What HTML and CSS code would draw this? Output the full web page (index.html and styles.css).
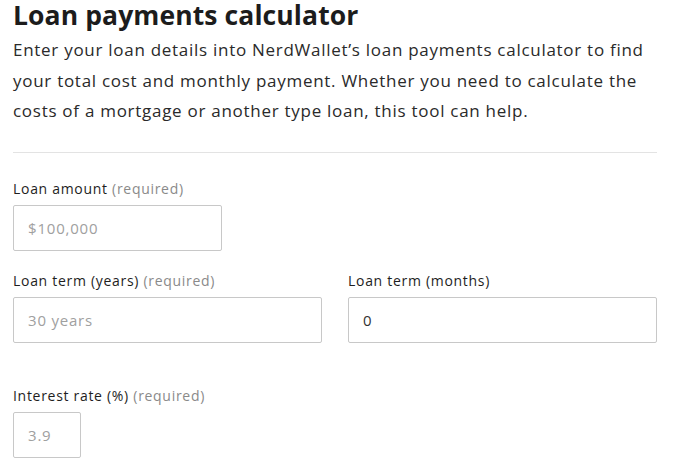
FILE: index.html
```html
<!DOCTYPE html>
<html>
<head>
<meta charset="utf-8">
<link rel="stylesheet" href="styles.css">
</head>
<body>
<main class="calc">
  <h1 class="title">Loan payments calculator</h1>
  <p class="intro">Enter your loan details into NerdWallet’s loan payments calculator to find your total cost and monthly payment. Whether you need to calculate the costs of a mortgage or another type loan, this tool can help.</p>
  <hr class="divider">
  <div class="field first">
    <label class="label">Loan amount <span class="req">(required)</span></label>
    <div class="input w-amount"><span class="ph">$100,000</span></div>
  </div>
  <div class="row">
    <div class="field">
      <label class="label">Loan term (years) <span class="req">(required)</span></label>
      <div class="input"><span class="ph">30 years</span></div>
    </div>
    <div class="field">
      <label class="label">Loan term (months)</label>
      <div class="input"><span class="val">0</span></div>
    </div>
  </div>
  <div class="field rate">
    <label class="label">Interest rate (%) <span class="req">(required)</span></label>
    <div class="input w-rate"><span class="ph">3.9</span></div>
  </div>
</main>
</body>
</html>
```

FILE: styles.css
```css
* { box-sizing: border-box; }
html, body { margin: 0; padding: 0; background: #fff; }
body { font-family: "Open Sans", "DejaVu Sans", sans-serif; color: #222; }
.calc { padding: 0 23px 0 13px; }
.title { margin: 0; font-size: 26.5px; font-weight: 700; line-height: 31px; color: #1c1c1c; letter-spacing: 0.1px; }
.intro { margin: 4px 0 0; font-size: 17px; line-height: 30.5px; color: #2a2a2a; letter-spacing: 0.72px; }
.divider { border: 0; border-top: 1px solid #e3e3e3; margin: 25px 0 0; }
.field { display: flex; flex-direction: column; }
.label { font-size: 14px; line-height: 18px; color: #1e1e1e; font-weight: 500; margin-top: 27px; margin-bottom: 7px; letter-spacing: 0.7px; }
.req { color: #8a8a8a; font-weight: 400; }
.input { height: 46px; border: 1px solid #c8c8c8; border-radius: 2px; display: flex; align-items: center; padding: 0 14px; font-size: 15px; letter-spacing: 0.8px; }
.ph { color: #a0a0a0; }
.val { color: #333; }
.w-amount { width: 209px; }
.w-rate { width: 68px; }
.row { display: grid; grid-template-columns: 309px 309px; column-gap: 26px; }
.row .label { margin-top: 21px; }
.rate .label { margin-top: 44px; }
```
